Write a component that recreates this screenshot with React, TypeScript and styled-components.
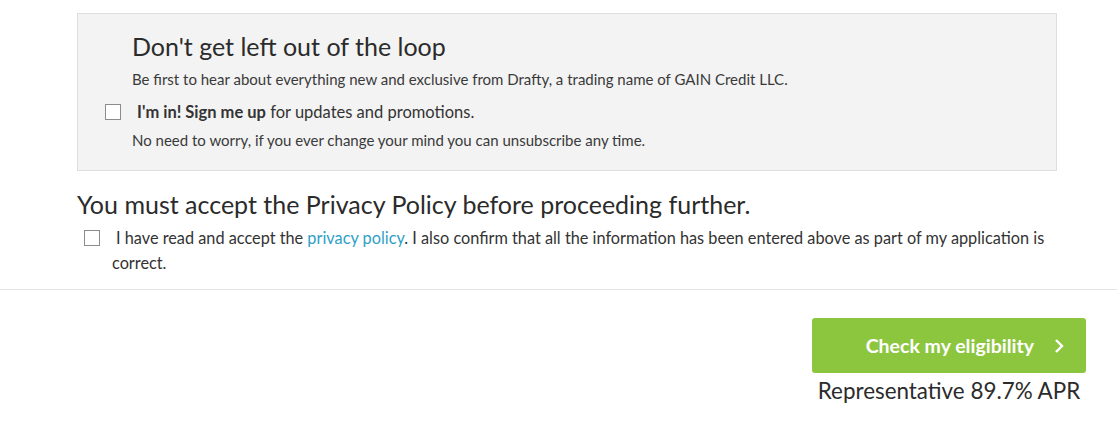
import styled, { createGlobalStyle } from "styled-components";

const GlobalStyle = createGlobalStyle`
  body {
    margin: 0;
    background: #ffffff;
    font-family: Lato, "Open Sans", Arial, sans-serif;
    color: #333333;
  }
`;

const Page = styled.div`
  padding-top: 13px;
`;

const Content = styled.div`
  margin-left: 77px;
  width: 980px;
`;

const Panel = styled.div`
  background-color: #f3f3f3;
  border: 1px solid #dedede;
  padding: 18px 20px 20px 54px;
`;

const PanelTitle = styled.h2`
  margin: 0;
  font-size: 25px;
  line-height: 28px;
  font-weight: 400;
  color: #2b2b2b;
`;

const Small = styled.p<{ $top: number }>`
  margin: ${(props) => props.$top}px 0 0 0;
  font-size: 15px;
  line-height: 20px;
  color: #3a3a3a;
`;

const OptRow = styled.label`
  display: flex;
  align-items: center;
  margin: 13px 0 0 -27px;
  font-size: 16.5px;
  line-height: 20px;
  color: #333;
  gap: 16px;
  b {
    font-weight: 700;
  }
`;

const Box = styled.span`
  display: inline-block;
  flex: none;
  width: 14px;
  height: 14px;
  border: 1px solid #8c8c8c;
  background: #fff;
  vertical-align: -2px;
`;

const SectionTitle = styled.h2`
  margin: 18px 0 0 0;
  font-size: 25px;
  line-height: 30px;
  font-weight: 400;
  color: #2b2b2b;
`;

const Consent = styled.label`
  display: block;
  margin-top: 6px;
  padding-left: 35px;
  font-size: 16.3px;
  line-height: 25px;
  color: #333;
  ${Box} {
    margin-left: -28px;
    margin-right: 16px;
  }
  a {
    color: #2f9fc6;
    text-decoration: none;
  }
`;

const Divider = styled.hr`
  margin: 14px 0 0 0;
  border: none;
  border-top: 1px solid #e4e4e4;
`;

const Footer = styled.div`
  display: flex;
  flex-direction: column;
  align-items: flex-end;
  padding: 28px 31px 0 0;
`;

const Action = styled.div`
  display: flex;
  flex-direction: column;
  align-items: center;
`;

const CheckButton = styled.button`
  display: flex;
  align-items: center;
  justify-content: flex-end;
  gap: 20px;
  width: 274px;
  height: 55px;
  padding: 0 22px 0 0;
  border: none;
  border-radius: 3px;
  background-color: #8cc63f;
  color: #fff;
  font-family: Lato, "Open Sans", Arial, sans-serif;
  font-size: 19.5px;
  font-weight: 700;
  cursor: pointer;
`;

const Apr = styled.div`
  margin-top: 6px;
  font-size: 22.4px;
  line-height: 24px;
  color: #2b2b2b;
`;

export default function App() {
  return (
    <Page>
      <GlobalStyle />
      <Content>
        <Panel>
          <PanelTitle>Don't get left out of the loop</PanelTitle>
          <Small $top={9}>
            Be first to hear about everything new and exclusive from Drafty, a
            trading name of GAIN Credit LLC.
          </Small>
          <OptRow>
            <Box />
            <span>
              <b>I'm in! Sign me up</b> for updates and promotions.
            </span>
          </OptRow>
          <Small $top={8}>
            No need to worry, if you ever change your mind you can unsubscribe
            any time.
          </Small>
        </Panel>
        <SectionTitle>
          You must accept the Privacy Policy before proceeding further.
        </SectionTitle>
        <Consent>
          <Box />I have read and accept the <a href="#">privacy policy</a>. I
          also confirm that all the information has been entered above as part
          of my application is correct.
        </Consent>
      </Content>
      <Divider />
      <Footer>
        <Action>
          <CheckButton>
            <span>Check my eligibility</span>
            <svg width="10" height="16" viewBox="0 0 10 16">
              <path
                d="M2 2 L8 8 L2 14"
                fill="none"
                stroke="#fff"
                strokeWidth="2.4"
              />
            </svg>
          </CheckButton>
          <Apr>Representative 89.7% APR</Apr>
        </Action>
      </Footer>
    </Page>
  );
}
